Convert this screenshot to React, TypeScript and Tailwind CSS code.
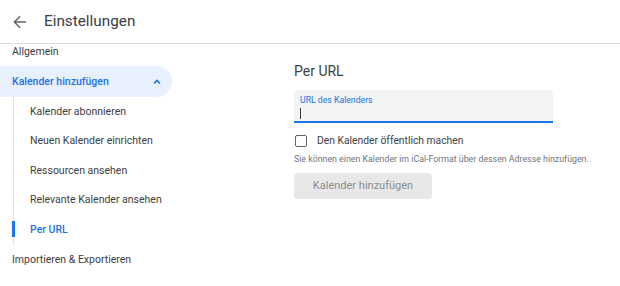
import React from "react";

export default function App() {
  const subItems = [
    "Kalender abonnieren",
    "Neuen Kalender einrichten",
    "Ressourcen ansehen",
    "Relevante Kalender ansehen",
  ];
  return (
    <div className="w-[620px] h-[286px] bg-white overflow-hidden" style={{ fontFamily: "Roboto, 'Noto Sans', sans-serif" }}>
      <div className="h-[44px] flex items-center border-b border-[#dadce0]">
        <div className="w-[44px] flex items-center pl-[13px]">
          <svg width="14" height="14" viewBox="0 0 16 16" fill="none">
            <path d="M15 8H2M8 1.5L1.5 8L8 14.5" stroke="#5f6368" strokeWidth="1.6" />
          </svg>
        </div>
        <div className="text-[15.3px] text-[#3c4043] leading-none">Einstellungen</div>
      </div>
      <div className="flex">
        <div className="w-[172px] shrink-0 whitespace-nowrap">
          <div className="h-[17px] pl-[12px] text-[10.5px] leading-[16px] text-[#3c4043]">Allgemein</div>
          <div className="mt-[5px] h-[31px] rounded-r-full bg-[#e8f0fe] flex items-center justify-between pl-[12px] pr-[10px]">
            <span className="text-[10.5px] font-medium text-[#1a73e8]">Kalender hinzufügen</span>
            <svg width="10" height="10" viewBox="0 0 10 10">
              <path d="M2 6.5L5 3.5L8 6.5" stroke="#1a73e8" strokeWidth="1.6" fill="none" />
            </svg>
          </div>
          <div className="ml-[13px] border-l border-[#e0e0e0] mt-0">
            {subItems.map((t) => (
              <div key={t} className="h-[29.5px] flex items-center pl-[16px] text-[10.5px] text-[#3c4043]">
                {t}
              </div>
            ))}
            <div className="h-[29.5px] flex items-center relative pl-[16px] text-[10.5px] font-medium text-[#1a73e8]">
              <div className="absolute left-[-2px] top-[6px] w-[3px] h-[16px] bg-[#1a73e8]" />
              Per URL
            </div>
          </div>
          <div className="h-[30px] flex items-center pl-[12px] text-[10.5px] text-[#3c4043]">Importieren &amp; Exportieren</div>
        </div>
        <div className="pl-[122px] pt-[17px] whitespace-nowrap">
          <div className="text-[14px] text-[#3c4043] leading-[20px]">Per URL</div>
          <div className="mt-[9px] w-[259px] h-[33px] bg-[#f1f3f4] rounded-t-[4px] border-b-2 border-[#1a73e8] pl-[6px] pt-[4px]">
            <div className="text-[8.7px] leading-[12px] text-[#1a73e8]">URL des Kalenders</div>
            <div className="mt-[2px] w-[1px] h-[11px] bg-[#3c4043]" />
          </div>
          <div className="mt-[10px] flex items-center">
            <div className="w-[12px] h-[12px] border-[1.5px] border-[#5f6368] rounded-[2px] ml-[1px]" />
            <span className="ml-[10px] text-[10.3px] text-[#3c4043]">Den Kalender öffentlich machen</span>
          </div>
          <div className="mt-[5px] text-[8.8px] text-[#70757a] leading-[12px]">Sie können einen Kalender im iCal-Format über dessen Adresse hinzufügen.</div>
          <div className="mt-[8px] w-[138px] h-[26px] rounded-[4px] bg-[#e8e8e8] flex items-center justify-center text-[11px] text-[#8a8c8f]">
            Kalender hinzufügen
          </div>
        </div>
      </div>
    </div>
  );
}
